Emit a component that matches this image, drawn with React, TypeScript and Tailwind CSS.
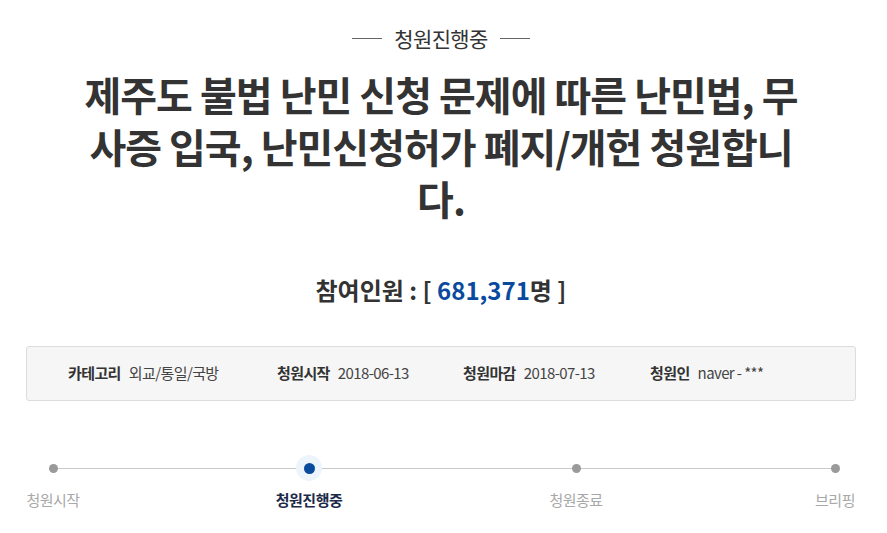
import React from "react";

const steps = [
  { label: "청원시작", active: false, width: "w-[54px]", ml: "ml-0" },
  { label: "청원진행중", active: true, width: "w-[70px]", ml: "ml-[194px]" },
  { label: "청원종료", active: false, width: "w-[60px]", ml: "ml-[202px]" },
  { label: "브리핑", active: false, width: "w-[42px]", ml: "ml-[208px]" },
];

const info = [
  { label: "카테고리", value: "외교/통일/국방", width: "w-[209px]" },
  { label: "청원시작", value: "2018-06-13", width: "w-[186px]" },
  { label: "청원마감", value: "2018-07-13", width: "w-[187px]" },
  { label: "청원인", value: "naver - ***", width: "" },
];

export default function App() {
  return (
    <div
      className="w-[887px] h-[533px] bg-white text-[#333] overflow-hidden"
      style={{ fontFamily: '"Noto Sans CJK KR", "Noto Sans", sans-serif' }}
    >
      <div className="w-[830px] ml-[26px]">
        {/* Status label */}
        <div className="flex items-center justify-center gap-[12px] pt-[24px]">
          <span className="w-[30px] h-px bg-[#666]" />
          <span className="text-[21px] leading-[28px] tracking-[-0.6px] text-[#333]">청원진행중</span>
          <span className="w-[30px] h-px bg-[#666]" />
        </div>

        {/* Title */}
        <h1 className="mx-auto mt-[16px] w-[724px] break-all text-center text-[40px] font-bold leading-[52px] tracking-[-1px] text-[#333]">
          제주도 불법 난민 신청 문제에 따른 난민법, 무사증 입국, 난민신청허가 폐지/개헌 청원합니다.
        </h1>

        {/* Participants */}
        <div className="mt-[49px] text-center text-[24px] font-bold leading-[34px] text-[#333]">
          참여인원 : [ <span className="text-[#0a4a9e]">681,371</span>명 ]
        </div>

        {/* Info box */}
        <div className="mt-[39px] h-[55px] flex items-center pl-[41px] rounded-[3px] border border-[#dcdcdc] bg-[#f6f6f6] text-[15px] tracking-[-0.6px]">
          {info.map((item) => (
            <div key={item.label} className={`${item.width} flex items-center gap-2`}>
              <span className="font-bold text-[#333]">{item.label}</span>
              <span className="text-[#444]">{item.value}</span>
            </div>
          ))}
        </div>

        {/* Progress */}
        <div className="relative mt-[55px]">
          <div className="absolute left-[27px] right-[21px] top-[12px] h-px bg-[#c8c8c8]" />
          <div className="relative flex">
            {steps.map((step) => (
              <div key={step.label} className={`${step.width} ${step.ml} flex flex-col items-center`}>
                <div className="h-[24px] flex items-center justify-center">
                  {step.active ? (
                    <div className="w-[26px] h-[26px] rounded-full bg-[#eef4fc] flex items-center justify-center">
                      <div className="w-[11px] h-[11px] rounded-full bg-[#0a4a9c]" />
                    </div>
                  ) : (
                    <div className="w-[9px] h-[9px] rounded-full bg-[#9a9a9a]" />
                  )}
                </div>
                <span
                  className={`mt-[9px] whitespace-nowrap text-[15px] leading-[22px] tracking-[-0.5px] ${
                    step.active ? "font-bold text-[#1c2a4a]" : "text-[#a8a8a8]"
                  }`}
                >
                  {step.label}
                </span>
              </div>
            ))}
          </div>
        </div>
      </div>
    </div>
  );
}
